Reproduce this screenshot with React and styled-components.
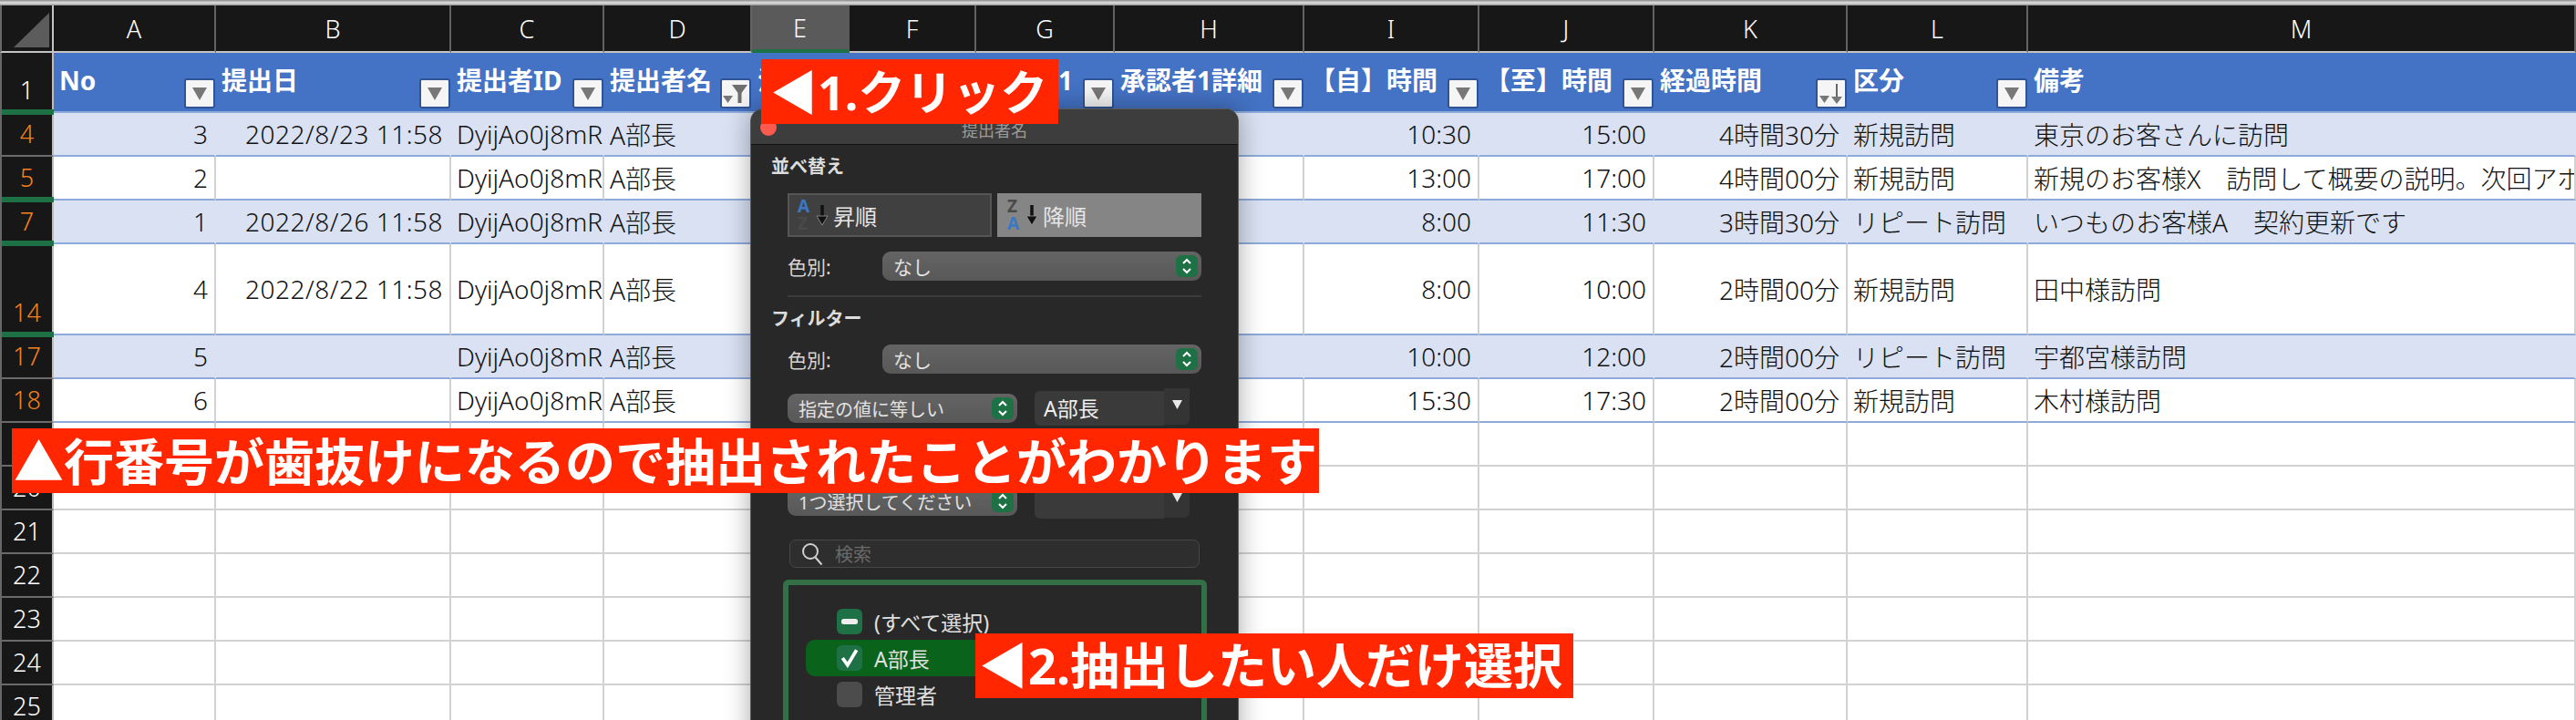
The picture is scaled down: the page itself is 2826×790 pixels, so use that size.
import React from "react";
import styled, { createGlobalStyle } from "styled-components";

const FONT = `"Noto Sans", "Noto Sans CJK JP", sans-serif`;
const TEMPLATE = "59px 178px 258px 168px 162px 107px 139px 152px 208px 192px 192px 212px 198px 1fr";

const GlobalStyle = createGlobalStyle`
  html, body { margin: 0; padding: 0; background: #fff; }
  body { font-family: ${FONT}; }
`;

const Page = styled.div`
  position: relative;
  width: 2826px;
  height: 790px;
  overflow: hidden;
  background: #fff;
`;
const TopStrip = styled.div`
  height: 6px;
  background: linear-gradient(#8a8a8a, #e2e2e2 50%, #8f8f8f);
`;
const LetterRow = styled.div`
  display: grid;
  grid-template-columns: ${TEMPLATE};
  height: 52px;
`;
const Corner = styled.div`
  box-sizing: border-box;
  background: #171717;
  border-left: 2px solid #666;
  border-right: 2px solid #c4c4c4;
  border-bottom: 2px solid #c4c4c4;
  padding: 8px 3px 4px 13px;
  svg { display: block; }
`;
const Letter = styled.div`
  box-sizing: border-box;
  display: flex;
  align-items: center;
  justify-content: center;
  background: ${(p) => (p.$active ? "#5a5a5a" : "#171717")};
  border-right: 2px solid ${(p) => (p.$active ? "#5a5a5a" : "#626262")};
  border-bottom: ${(p) => (p.$active ? "4px solid #1e7145" : "2px solid #c4c4c4")};
  color: #fff;
  font-size: 27px;
  font-weight: 300;
  line-height: 1;
`;
const Row = styled.div`
  display: grid;
  grid-template-columns: ${TEMPLATE};
  height: ${(p) => p.$height || 48}px;
`;
const RowNumber = styled.div`
  position: relative;
  box-sizing: border-box;
  display: flex;
  align-items: flex-end;
  justify-content: center;
  background: #171717;
  border-left: 2px solid #666;
  border-right: 2px solid #bdbdbd;
  border-bottom: 2px solid #6a6a6a;
  padding-bottom: 5px;
  color: ${(p) => (p.$hit ? "#f5811f" : "#fff")};
  font-size: 27px;
  font-weight: 300;
  line-height: 36px;
  ${(p) =>
    p.$gap &&
    `&::after {
      content: "";
      position: absolute;
      left: 0;
      right: -2px;
      bottom: -4px;
      height: 6px;
      background: #1e7145;
      z-index: 1;
    }`}
`;
const Cell = styled.div`
  box-sizing: border-box;
  display: flex;
  align-items: center;
  justify-content: ${(p) => (p.$right ? "flex-end" : "flex-start")};
  min-width: 0;
  overflow: hidden;
  white-space: nowrap;
  padding: 0 ${(p) => (p.$right ? "7px" : "0")} 0 ${(p) => (p.$right ? "0" : "6px")};
  background: ${(p) => (p.$band ? "#d9e1f2" : "#fff")};
  border-right: 2px solid ${(p) => (p.$band ? "#d9e1f2" : "#d2d2d2")};
  border-bottom: 2px solid ${(p) => (p.$table ? "#8eaadb" : "#d2d2d2")};
  color: #111;
  font-size: 28px;
  font-weight: 300;
  letter-spacing: ${(p) => (p.$date ? "0.5px" : "0")};
`;
const HeadCell = styled.div`
  box-sizing: border-box;
  display: flex;
  justify-content: space-between;
  min-width: 0;
  overflow: hidden;
  background: #4472c4;
  border-bottom: 2px solid #8eaadb;
  padding: 0 1px 3px 6px;
  color: #fff;
  font-size: 28px;
  font-weight: 700;
  white-space: nowrap;
`;
const HeadLabel = styled.span`
  align-self: center;
  line-height: 62px;
  margin-top: -1px;
`;
const FilterButton = styled.div`
  box-sizing: border-box;
  flex: none;
  align-self: flex-end;
  display: flex;
  align-items: center;
  justify-content: center;
  width: 34px;
  height: 33px;
  background: #f5f5f5;
  border: 2px solid #2f5496;
  border-radius: 3px;
`;
const Dialog = styled.div`
  position: absolute;
  left: 823px;
  top: 119px;
  z-index: 2;
  box-sizing: border-box;
  width: 536px;
  height: 720px;
  background: #282828;
  border: 1px solid #5a5a5a;
  border-radius: 14px 14px 0 0;
  box-shadow: 0 0 28px rgba(0, 0, 0, 0.35);
  color: #dedede;
`;
const TitleBar = styled.div`
  position: relative;
  box-sizing: border-box;
  height: 39px;
  padding-top: 8px;
  background: #3d3d3d;
  border-bottom: 1px solid #111;
  border-radius: 13px 13px 0 0;
  color: #9b9b9b;
  font-size: 18px;
  line-height: 30px;
  text-align: center;
`;
const CloseDot = styled.span`
  position: absolute;
  left: 10px;
  top: 11px;
  width: 18px;
  height: 18px;
  border-radius: 50%;
  background: #fb5a4f;
`;
const DialogBody = styled.div`
  padding: 0 40px;
`;
const SectionTitle = styled.div`
  margin: ${(p) => p.$top}px 0 0 -18px;
  color: #dcdcdc;
  font-size: 20px;
  font-weight: 700;
  line-height: 28px;
`;
const SortRow = styled.div`
  display: flex;
  gap: 6px;
  margin-top: 15px;
`;
const SortButton = styled.div`
  box-sizing: border-box;
  flex: 1;
  height: 48px;
  display: flex;
  align-items: center;
  gap: 5px;
  padding-left: 9px;
  background: ${(p) => (p.$on ? "#858585" : "#404040")};
  border: 2px solid ${(p) => (p.$on ? "#858585" : "#565656")};
  color: #e6e6e6;
  font-size: 24px;
`;
const SortLetters = styled.span`
  display: flex;
  flex-direction: column;
  width: 15px;
  font-size: 19px;
  font-weight: 700;
  line-height: 19px;
`;
const SortLetter = styled.span`
  color: ${(p) => (p.$blue ? "#3a78c4" : "#4a4a4a")};
`;
const FieldRow = styled.div`
  display: flex;
  align-items: center;
  margin-top: ${(p) => p.$top}px;
`;
const FieldLabel = styled.span`
  width: 104px;
  color: #d4d4d4;
  font-size: 21px;
`;
const Select = styled.div`
  box-sizing: border-box;
  width: ${(p) => p.$width}px;
  height: 32px;
  display: flex;
  align-items: center;
  justify-content: space-between;
  padding: 0 4px 0 12px;
  background: linear-gradient(#646464, #585858);
  border-radius: 9px;
  color: #e2e2e2;
  font-size: ${(p) => p.$size || 21}px;
  white-space: nowrap;
`;
const Stepper = styled.span`
  flex: none;
  width: 24px;
  height: 24px;
  display: flex;
  align-items: center;
  justify-content: center;
  background: #1e7145;
  border-radius: 6px;
`;
const Divider = styled.div`
  height: 2px;
  margin-top: 16px;
  background: #3c3c3c;
`;
const Combo = styled.div`
  display: flex;
  width: 170px;
  margin-left: 19px;
`;
const ComboInput = styled.div`
  box-sizing: border-box;
  flex: 1;
  height: 38px;
  padding-left: 10px;
  background: #3a3a3a;
  border-radius: 6px 0 0 6px;
  color: #eee;
  font-size: 23px;
  line-height: 38px;
`;
const ComboDrop = styled.div`
  width: 28px;
  height: 40px;
  margin-top: -3px;
  display: flex;
  align-items: flex-start;
  justify-content: center;
  padding-top: 13px;
  box-sizing: border-box;
  background: #343434;
  border-radius: 0 0 6px 0;
`;
const SearchBox = styled.div`
  box-sizing: border-box;
  height: 31px;
  margin: 23px 2px 0;
  display: flex;
  align-items: center;
  gap: 13px;
  padding-left: 12px;
  background: #2e2e2e;
  border: 1px solid #474747;
  border-radius: 7px;
  color: #6a6a6a;
  font-size: 20px;
`;
const ListBox = styled.div`
  box-sizing: border-box;
  margin: 13px -6px 0 -5px;
  height: 240px;
  padding: 20px 16px 0 19px;
  border: 6px solid #336f47;
  border-radius: 6px;
`;
const ListItem = styled.div`
  height: 40px;
  display: flex;
  align-items: center;
  gap: 13px;
  padding-left: 34px;
  background: ${(p) => (p.$selected ? "#0a631b" : "transparent")};
  border-radius: 10px;
  color: #e0e0e0;
  font-size: 23px;
  white-space: nowrap;
`;
const CheckBox = styled.span`
  flex: none;
  width: 28px;
  height: 28px;
  display: flex;
  align-items: center;
  justify-content: center;
  background: ${(p) => (p.$on ? "#1e7145" : "#4c4c4c")};
  border-radius: 6px;
`;
const Banner = styled.div`
  position: absolute;
  left: ${(p) => p.$left}px;
  top: ${(p) => p.$top}px;
  z-index: 3;
  box-sizing: border-box;
  width: ${(p) => p.$width}px;
  height: 71px;
  display: flex;
  align-items: center;
  padding-left: ${(p) => p.$pad}px;
  background: #ff2600;
  color: #fff;
  font-size: ${(p) => p.$size}px;
  font-weight: 700;
  line-height: 71px;
  white-space: nowrap;
`;

const columns = ["A", "B", "C", "D", "E", "F", "G", "H", "I", "J", "K", "L", "M"];
const headers = [
  "No", "提出日", "提出者ID", "提出者名", "決裁者", "決裁日", "承認者1", "承認者1詳細",
  "【自】時間", "【至】時間", "経過時間", "区分", "備考",
];
const ID = "DyijAo0j8mRxq";
const records = [
  { n: 4, band: true, cells: ["3", "2022/8/23 11:58", "10:30", "15:00", "4時間30分", "新規訪問", "東京のお客さんに訪問"] },
  { n: 5, gap: true, cells: ["2", "", "13:00", "17:00", "4時間00分", "新規訪問", "新規のお客様X　訪問して概要の説明。次回アポイントを調整します。"] },
  { n: 7, gap: true, band: true, cells: ["1", "2022/8/26 11:58", "8:00", "11:30", "3時間30分", "リピート訪問", "いつものお客様A　契約更新です"] },
  { n: 14, gap: true, height: 100, cells: ["4", "2022/8/22 11:58", "8:00", "10:00", "2時間00分", "新規訪問", "田中様訪問"] },
  { n: 17, band: true, cells: ["5", "", "10:00", "12:00", "2時間00分", "リピート訪問", "宇都宮様訪問"] },
  { n: 18, cells: ["6", "", "15:30", "17:30", "2時間00分", "新規訪問", "木村様訪問"] },
];
const emptyRows = [19, 20, 21, 22, 23, 24, 25];

const DownTriangle = () => (
  <svg width="16" height="14" viewBox="0 0 16 14"><path d="M0 0h16L8 14z" fill="#777" /></svg>
);
const FunnelIcon = () => (
  <svg width="28" height="26" viewBox="0 0 28 26">
    <path d="M10 3h17l-6.5 9v11h-4V12z" fill="#6e6e6e" />
    <path d="M0 15h11l-5.5 8z" fill="#777" />
  </svg>
);
const SortedIcon = () => (
  <svg width="28" height="26" viewBox="0 0 28 26">
    <path d="M1 15h11l-5.5 8z" fill="#777" />
    <path d="M20 2v18" stroke="#666" strokeWidth="2" />
    <path d="M14 16h12l-6 8z" fill="#777" />
  </svg>
);
const CornerMark = () => (
  <svg width="39" height="38" viewBox="0 0 39 38"><path d="M39 0v38H0z" fill="#5c5c5c" /></svg>
);
const StepperIcon = () => (
  <svg width="12" height="18" viewBox="0 0 12 18" fill="none" stroke="#fff" strokeWidth="2">
    <path d="M2 6l4-4 4 4M2 12l4 4 4-4" />
  </svg>
);
const SortArrow = () => (
  <svg width="14" height="24" viewBox="0 0 14 24">
    <path d="M7 1v14" stroke="#111" strokeWidth="3.5" />
    <path d="M1 13h12l-6 10z" fill="#111" stroke="#999" strokeWidth="0.8" />
  </svg>
);
const SearchIcon = () => (
  <svg width="24" height="26" viewBox="0 0 24 26" fill="none" stroke="#cfcfcf" strokeWidth="2">
    <circle cx="10" cy="10" r="8" />
    <path d="M15.5 16.5l7 8" />
  </svg>
);
const DropMark = () => (
  <svg width="11" height="10" viewBox="0 0 11 10"><path d="M0 0h11L5.5 10z" fill="#e8e8e8" /></svg>
);
const CheckMark = () => (
  <svg width="22" height="22" viewBox="0 0 20 20" fill="none" stroke="#fff" strokeWidth="3.4">
    <path d="M3 10l5 7 9-15" />
  </svg>
);
const MinusMark = () => (
  <svg width="18" height="6" viewBox="0 0 18 6"><rect width="18" height="6" rx="2.5" fill="#eee" /></svg>
);

const buttonIcon = (i) => {
  if (i === 3) return <FunnelIcon />;
  if (i === 10) return <SortedIcon />;
  return <DownTriangle />;
};

const SheetHeader = () => (
  <Row $height={66}>
    <RowNumber $gap>1</RowNumber>
    {headers.map((h, i) => (
      <HeadCell key={h}>
        <HeadLabel>{h}</HeadLabel>
        {i !== 12 && <FilterButton>{buttonIcon(i)}</FilterButton>}
      </HeadCell>
    ))}
  </Row>
);

const RecordRow = ({ record }) => {
  const [no, date, from, to, elapsed, kind, note] = record.cells;
  const band = record.band;
  return (
    <Row $height={record.height}>
      <RowNumber $hit $gap={record.gap}>{record.n}</RowNumber>
      <Cell $table $band={band} $right>{no}</Cell>
      <Cell $table $band={band} $right $date>{date}</Cell>
      <Cell $table $band={band}>{ID}</Cell>
      <Cell $table $band={band}>A部長</Cell>
      <Cell $table $band={band} />
      <Cell $table $band={band} />
      <Cell $table $band={band} />
      <Cell $table $band={band} />
      <Cell $table $band={band} $right>{from}</Cell>
      <Cell $table $band={band} $right>{to}</Cell>
      <Cell $table $band={band} $right>{elapsed}</Cell>
      <Cell $table $band={band}>{kind}</Cell>
      <Cell $table $band={band}>{note}</Cell>
    </Row>
  );
};

const FilterDialog = () => (
  <Dialog>
    <TitleBar>
      <CloseDot />
      提出者名
    </TitleBar>
    <DialogBody>
      <SectionTitle $top={10}>並べ替え</SectionTitle>
      <SortRow>
        <SortButton>
          <SortLetters>
            <SortLetter $blue>A</SortLetter>
            <SortLetter>Z</SortLetter>
          </SortLetters>
          <SortArrow />
          <span>昇順</span>
        </SortButton>
        <SortButton $on>
          <SortLetters>
            <SortLetter>Z</SortLetter>
            <SortLetter $blue>A</SortLetter>
          </SortLetters>
          <SortArrow />
          <span>降順</span>
        </SortButton>
      </SortRow>
      <FieldRow $top={16}>
        <FieldLabel>色別:</FieldLabel>
        <Select $width={350}>なし<Stepper><StepperIcon /></Stepper></Select>
      </FieldRow>
      <Divider />
      <SectionTitle $top={10}>フィルター</SectionTitle>
      <FieldRow $top={14}>
        <FieldLabel>色別:</FieldLabel>
        <Select $width={350}>なし<Stepper><StepperIcon /></Stepper></Select>
      </FieldRow>
      <FieldRow $top={19}>
        <Select $width={252} $size={20}>指定の値に等しい<Stepper><StepperIcon /></Stepper></Select>
        <Combo>
          <ComboInput>A部長</ComboInput>
          <ComboDrop><DropMark /></ComboDrop>
        </Combo>
      </FieldRow>
      <FieldRow $top={64}>
        <Select $width={252} $size={20}>1つ選択してください<Stepper><StepperIcon /></Stepper></Select>
        <Combo>
          <ComboInput />
          <ComboDrop><DropMark /></ComboDrop>
        </Combo>
      </FieldRow>
      <SearchBox><SearchIcon />検索</SearchBox>
      <ListBox>
        <ListItem><CheckBox $on><MinusMark /></CheckBox>(すべて選択)</ListItem>
        <ListItem $selected><CheckBox $on><CheckMark /></CheckBox>A部長</ListItem>
        <ListItem><CheckBox />管理者</ListItem>
      </ListBox>
    </DialogBody>
  </Dialog>
);

export default function App() {
  return (
    <Page>
      <GlobalStyle />
      <TopStrip />
      <LetterRow>
        <Corner><CornerMark /></Corner>
        {columns.map((c) => (
          <Letter key={c} $active={c === "E"}>{c}</Letter>
        ))}
      </LetterRow>
      <SheetHeader />
      {records.map((r) => (
        <RecordRow key={r.n} record={r} />
      ))}
      {emptyRows.map((n) => (
        <Row key={n}>
          <RowNumber>{n}</RowNumber>
          {columns.map((c) => (
            <Cell key={c} />
          ))}
        </Row>
      ))}
      <FilterDialog />
      <Banner $left={835} $top={65} $width={326} $pad={10} $size={52}>◀1.クリック</Banner>
      <Banner $left={13} $top={470} $width={1434} $pad={2} $size={55}>▲行番号が歯抜けになるので抽出されたことがわかります</Banner>
      <Banner $left={1070} $top={695} $width={656} $pad={4} $size={54}>◀2.抽出したい人だけ選択</Banner>
    </Page>
  );
}
